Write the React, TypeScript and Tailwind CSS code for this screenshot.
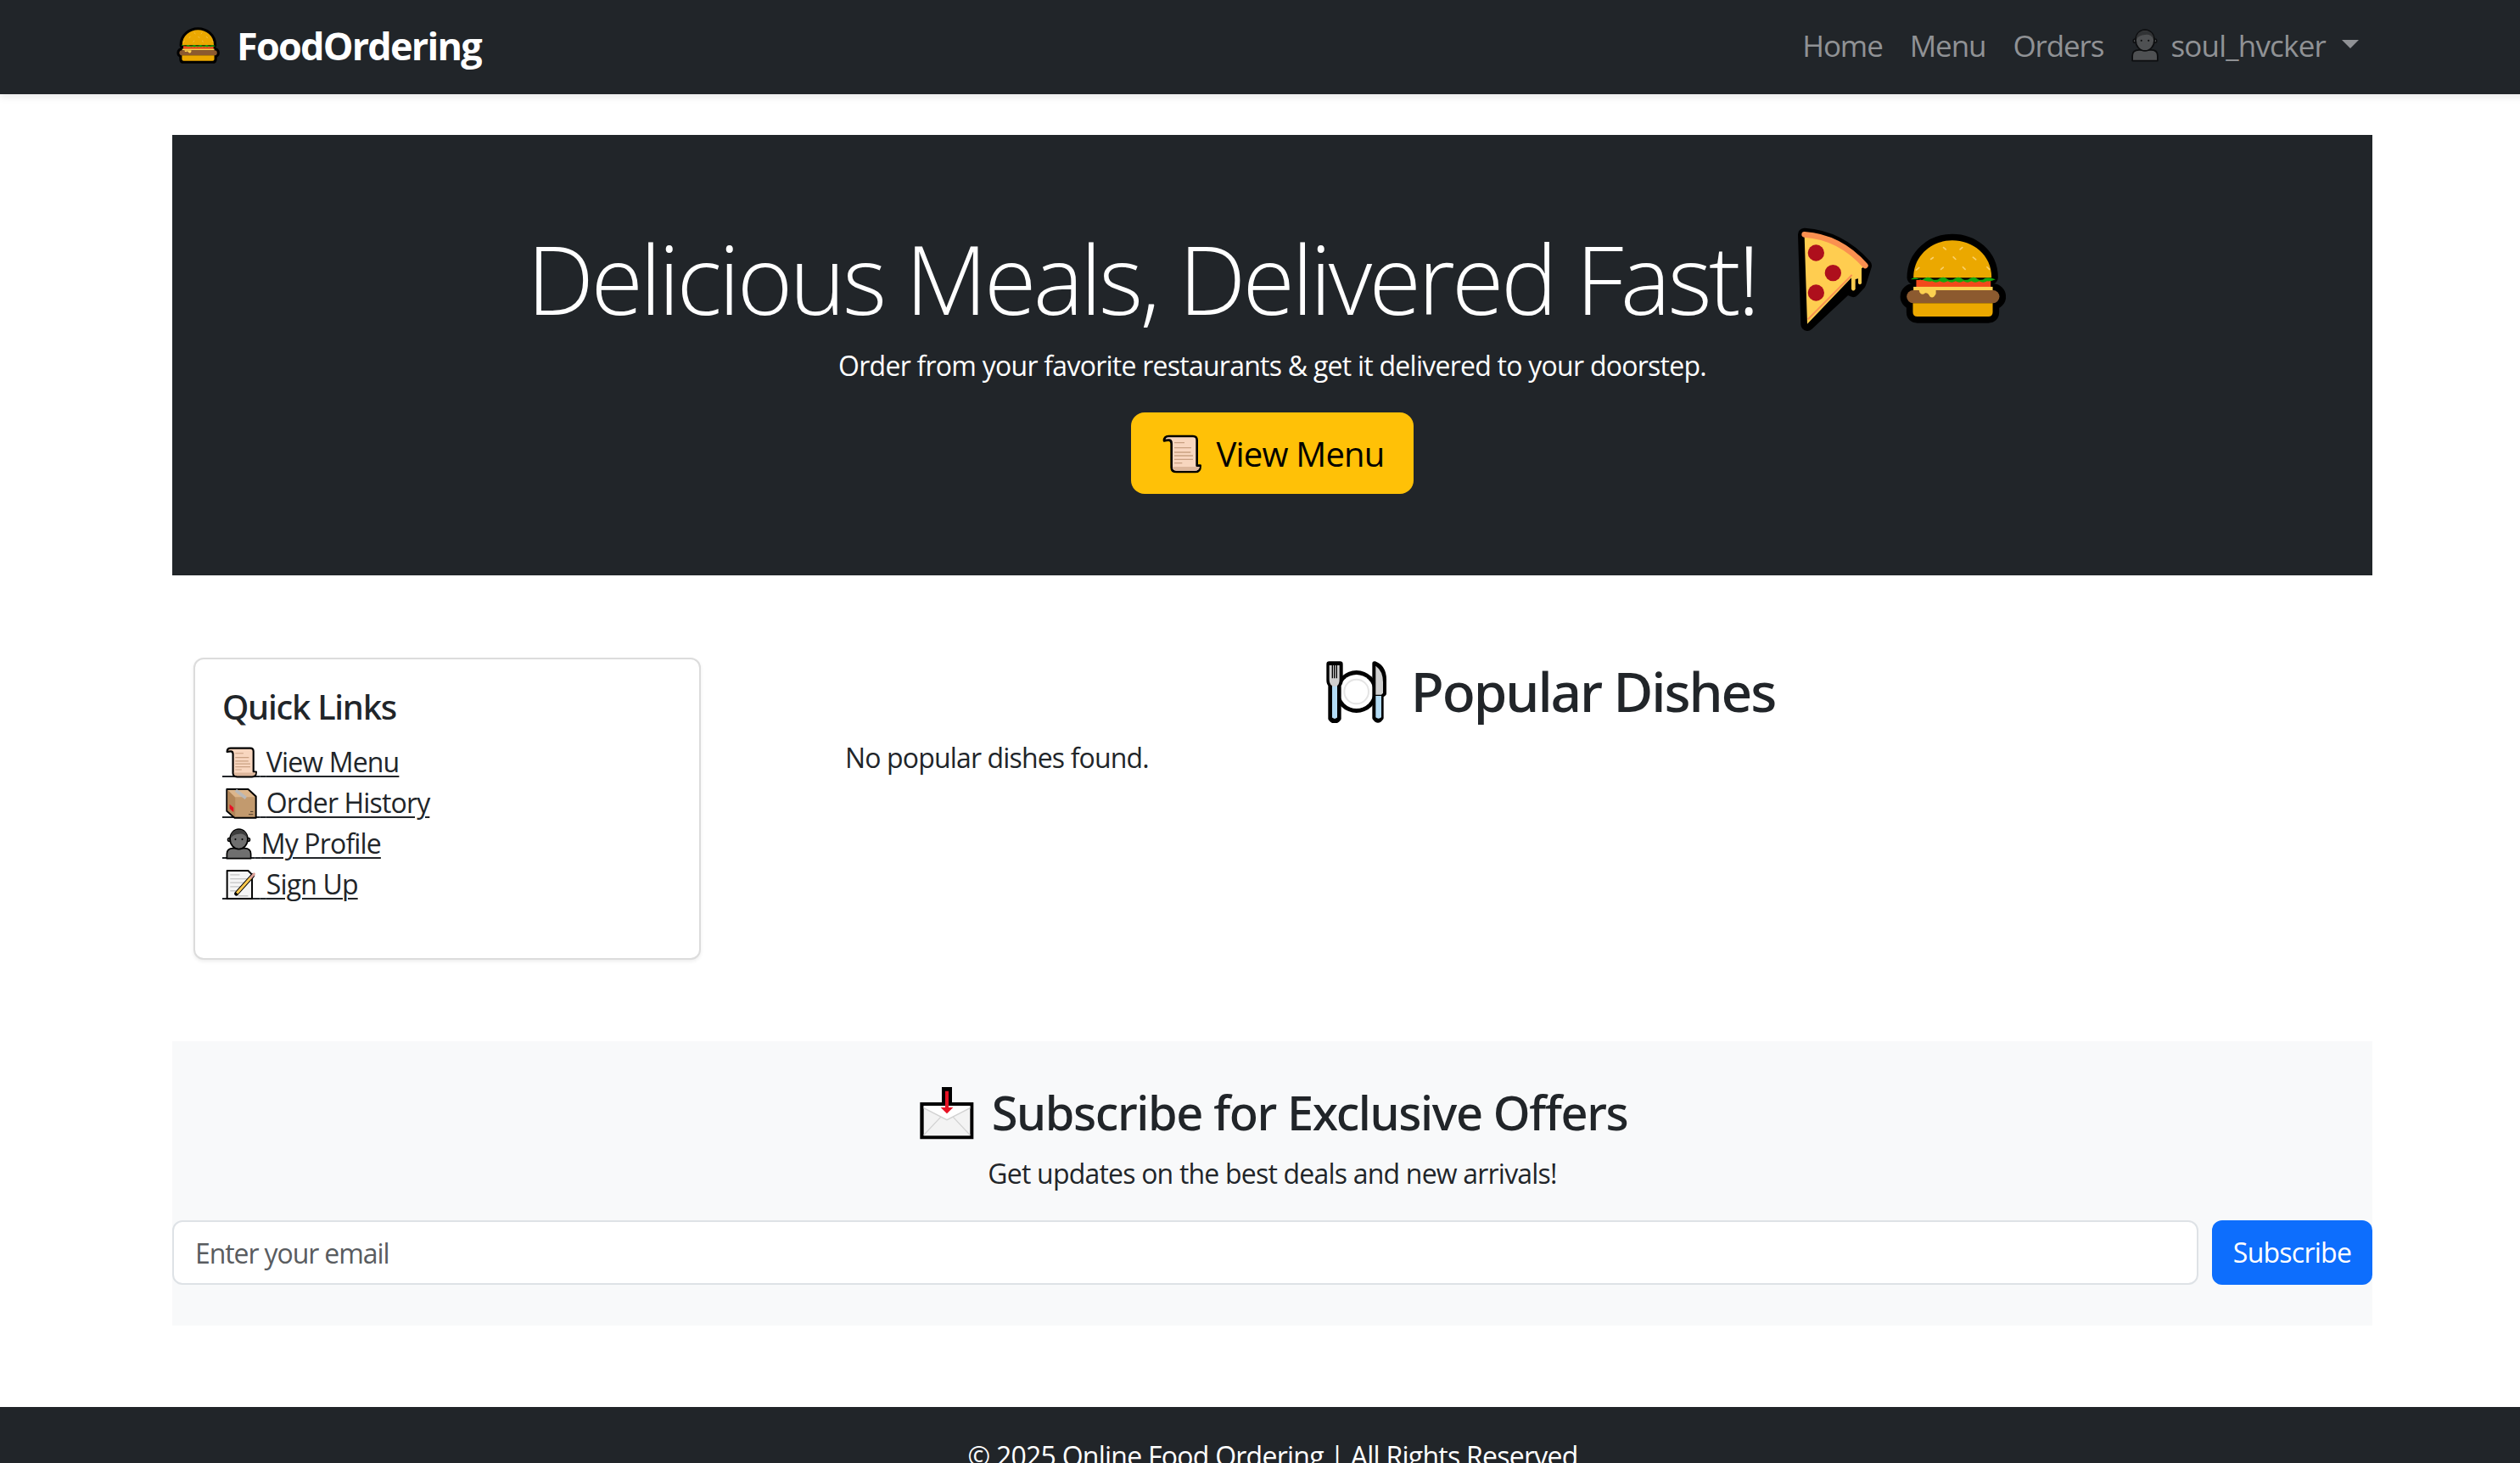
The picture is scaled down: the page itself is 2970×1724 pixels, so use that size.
const font = "font-['Open_Sans',sans-serif]";

type IconProps = { className?: string };

const BurgerIcon = ({ className }: IconProps) => {
  const shapes = (
    <>
      <path d="M530 258C530 175 600 125 668 125C740 125 808 175 808 258Z" />
      <rect x="506" y="302" width="330" height="46" rx="23" />
      <path d="M528 348H812V380Q812 396 796 396H544Q528 396 528 380Z" />
    </>
  );
  return (
    <svg className={className} viewBox="482 100 376 320">
      <g fill="#000" stroke="#000" strokeWidth="46" strokeLinejoin="round">{shapes}</g>
      <path d="M530 258C530 175 600 125 668 125C740 125 808 175 808 258Z" fill="#eba800" />
      <g stroke="#fbd069" strokeWidth="5" strokeLinecap="round">
        <path d="M637 150l8 7M704 150l-8 7M592 192l8-6M672 184l8 8M742 185l10 8M628 228l8-7M706 220l8 8M792 220l8 8M540 230l10-8" />
      </g>
      <rect x="540" y="266" width="265" height="26" fill="#f2491b" />
      <path
        d="M520 264q12-10 24-4q12 10 26 0q14-8 26 2q14 8 28-2q14-8 26 2q14 8 28-2q14-8 26 2q14 8 28-2q14-8 26 2q14 8 26-2q12-6 38 4q-16 8-30 6q-14 8-28 0q-14 8-28 0q-14 8-28 0q-14 8-28 0q-14 8-28 0q-14 8-28 0q-14 8-28 0q-14 4-42-8Z"
        fill="#16a80e"
      />
      <rect x="530" y="290" width="282" height="14" fill="#fcd050" />
      <rect x="506" y="302" width="330" height="46" rx="23" fill="#8c5a2f" />
      <path d="M550 302H610V315Q600 335 588 324Q582 310 572 312Q560 322 552 310Z" fill="#fcd050" />
      <path d="M528 348H812V380Q812 396 796 396H544Q528 396 528 380Z" fill="#eba800" />
    </svg>
  );
};

const PizzaIcon = ({ className }: IconProps) => (
  <svg className={className} viewBox="115 78 285 378">
    <g fill="#000" stroke="#000" strokeWidth="46" strokeLinejoin="round" strokeLinecap="round">
      <path d="M150 112C240 118 310 160 365 222L345 285L322 310L300 300L160 430Z" />
    </g>
    <path d="M150 118C240 125 310 170 362 225L340 240L160 428Z" fill="#ffcd50" />
    <path d="M318 255L162 412" stroke="#fa9050" strokeWidth="6" />
    <path d="M150 112C240 118 310 160 365 222" fill="none" stroke="#fa9050" strokeWidth="20" strokeLinecap="round" />
    <path d="M316 262L352 225V285Q346 292 340 285V268L330 270V305Q322 316 316 305Z" fill="#ffcd50" />
    <circle cx="191" cy="177" r="29" fill="#ae0f1c" />
    <circle cx="251" cy="248" r="29" fill="#ae0f1c" />
    <circle cx="191" cy="318" r="29" fill="#ae0f1c" />
  </svg>
);

const ScrollIcon = ({ className }: IconProps) => (
  <svg className={className} viewBox="154 128 138 138">
    <path
      d="M160 150Q160 134 176 134H262Q276 134 276 148V238H288Q288 260 270 260H204Q186 260 186 244V160Q186 148 176 148Q168 148 160 150Z"
      fill="#f8d6bf"
      stroke="#000"
      strokeWidth="8"
      strokeLinejoin="round"
    />
    <path d="M190 242H286Q284 256 270 256H204Q192 256 190 242Z" fill="#ddb79c" />
    <path d="M196 157H232M196 175H256M196 191H254M196 203H262M196 216H262M196 229H224" stroke="#c9a183" strokeWidth="4" />
  </svg>
);

const BoxIcon = ({ className }: IconProps) => (
  <svg className={className} viewBox="134 474 112 112">
    <path d="M138 480H214L242 506V582H166L138 558Z" fill="#c29a6e" stroke="#000" strokeWidth="6" strokeLinejoin="round" />
    <path d="M141 483H212L238 508H168Z" fill="#dcb68c" />
    <path d="M141 483L168 510V579L141 556Z" fill="#b28659" />
    <path d="M170 484L206 512" stroke="#b9b9b9" strokeWidth="11" />
    <path d="M148 534L162 546V562L148 550Z" fill="#e81224" />
    <path d="M222 560H232M216 570H232" stroke="#4a3a2a" strokeWidth="3" />
  </svg>
);

const PersonIcon = ({ className }: IconProps) => (
  <svg className={className} viewBox="132 618 92 110">
    <path d="M136 724V708Q136 688 158 688H198Q220 688 220 708V724Z" fill="#6f6f6f" stroke="#000" strokeWidth="5" strokeLinejoin="round" />
    <circle cx="145" cy="658" r="6" fill="#6f6f6f" stroke="#000" strokeWidth="4" />
    <circle cx="211" cy="658" r="6" fill="#6f6f6f" stroke="#000" strokeWidth="4" />
    <ellipse cx="178" cy="656" rx="31" ry="35" fill="#6f6f6f" stroke="#000" strokeWidth="5" />
    <path d="M149 652Q150 624 178 624Q206 624 207 652Q196 634 178 638Q158 640 149 652Z" fill="#3d3d3d" />
    <circle cx="166" cy="657" r="3" fill="#000" />
    <circle cx="190" cy="657" r="3" fill="#000" />
  </svg>
);

const MemoIcon = ({ className }: IconProps) => (
  <svg className={className} viewBox="132 762 112 112">
    <path d="M137 768H212L226 782V868H137Z" fill="#f5f5f5" stroke="#000" strokeWidth="6" strokeLinejoin="round" />
    <path d="M148 783H182M148 797H210M148 811H206M148 825H190M148 840H170M176 858H212" stroke="#c4c4c4" strokeWidth="4" />
    <path d="M170 850L228 786" stroke="#000" strokeWidth="15" strokeLinecap="round" />
    <path d="M172 848L222 792" stroke="#fcc94e" strokeWidth="9" />
    <path d="M222 792L233 780" stroke="#e0a39a" strokeWidth="9" strokeLinecap="round" />
  </svg>
);

const PlateIcon = ({ className }: IconProps) => (
  <svg className={className} viewBox="100 54 222 222">
    <circle cx="210" cy="165" r="75" fill="#000" />
    <circle cx="210" cy="165" r="60" fill="#fff" />
    <circle cx="210" cy="165" r="43" fill="none" stroke="#e4e4e4" strokeWidth="6" />
    <path d="M114 68H152V125Q152 135 146 140V260Q133 276 120 260V140Q114 135 114 125Z" fill="#000" stroke="#000" strokeWidth="20" strokeLinejoin="round" />
    <path d="M114 72H150V122Q150 138 142 144V256Q133 264 124 256V144Q114 138 114 122Z" fill="#cfcfcf" />
    <path d="M124 146H142V256Q133 264 124 256Z" fill="#b3dcf5" />
    <path d="M125 72V118M132 72V118M140 72V118" stroke="#000" strokeWidth="4" />
    <path d="M275 66Q308 80 308 122V172L298 180V258Q286 276 274 258V66Z" fill="#000" stroke="#000" strokeWidth="16" strokeLinejoin="round" />
    <path d="M278 74Q304 92 304 132V170L298 176H278Z" fill="#cfcfcf" />
    <path d="M278 180H298V256Q288 264 278 256Z" fill="#b3dcf5" />
  </svg>
);

const EnvelopeIcon = ({ className }: IconProps) => (
  <svg className={className} viewBox="76 64 192 186">
    <path d="M77 118H154V64H190V118H266V248H77Z" fill="#000" />
    <rect x="90" y="130" width="164" height="106" fill="#f3f3f3" />
    <path d="M90 130H254V138L172 180L90 138Z" fill="#fff" />
    <path d="M90 138L172 180L254 138M90 234L152 168M254 234L192 168" fill="none" stroke="#d2d2d2" strokeWidth="4" />
    <path d="M166 78H178V136H194L172 158L150 136H166Z" fill="#e81224" />
  </svg>
);

const quickLinks = [
  { label: "View Menu", Icon: ScrollIcon, size: "w-[37px] h-[37px]", gap: "tracking-[36px]" },
  { label: "Order History", Icon: BoxIcon, size: "w-[37px] h-[37px]", gap: "tracking-[36px]" },
  { label: "My Profile", Icon: PersonIcon, size: "w-[31px] h-[37px]", gap: "tracking-[30px]" },
  { label: "Sign Up", Icon: MemoIcon, size: "w-[37px] h-[37px]", gap: "tracking-[36px]" },
];

const Navbar = () => (
  <nav className="h-[111px] bg-[#212529] shadow-[0_4px_8px_rgba(0,0,0,0.08)]">
    <div className="mx-auto flex h-full w-[2640px] items-center justify-between px-6 pb-[4px]">
      <a className="flex items-center gap-[20px] pl-[4px] text-[45px] leading-[60px] font-bold tracking-[-1.8px] text-white">
        <BurgerIcon className="h-[43px] w-[51px]" />
        FoodOrdering
      </a>
      <div className="flex items-center text-[35px] leading-[48px] tracking-[-1.1px] text-[#909295]">
        <a className="px-4">Home</a>
        <a className="px-4">Menu</a>
        <a className="px-4">Orders</a>
        <a className="flex items-center px-4">
          <PersonIcon className="mr-[13px] h-[39px] w-[34px] opacity-60" />
          <span className="tracking-[-0.8px]">soul_hvcker</span>
          <span className="mb-[4px] ml-[19px] h-0 w-0 border-x-[10px] border-t-[10px] border-x-transparent border-t-[#909295]" />
        </a>
      </div>
    </div>
  </nav>
);

const Hero = () => (
  <section className="mt-12 bg-[#212529] py-24 text-center text-white">
    <h1 className="flex h-[135px] items-center justify-center pt-[10px] pr-[14px] text-[112px] leading-[134px] font-light tracking-[-3.7px]">
      Delicious Meals, Delivered Fast!
      <PizzaIcon className="ml-[44px] h-[126px] w-[95px]" />
      <BurgerIcon className="ml-[29px] h-[106px] w-[125px]" />
    </h1>
    <p className="mt-4 pt-[2px] text-[32px] leading-[46px] tracking-[-0.75px]">
      Order from your favorite restaurants &amp; get it delivered to your doorstep.
    </p>
    <a className="mt-8 inline-flex h-[96px] w-[333px] items-center justify-center gap-[17px] rounded-2xl bg-[#ffc107] pt-[2px] pl-[3px] text-[40px] tracking-[-0.8px] text-black">
      <ScrollIcon className="h-[46px] w-[46px]" />
      View Menu
    </a>
  </section>
);

const QuickLinks = () => (
  <aside className="ml-[25px] h-[356px] w-[598px] rounded-xl border-2 border-[#dcdcdc] bg-white px-8 pt-8 shadow-[0_2px_4px_rgba(0,0,0,0.075)]">
    <h5 className="mb-[17px] font-['Noto_Sans',sans-serif] text-[40px] leading-[48px] font-medium tracking-[-1.25px] text-[#212529]">Quick Links</h5>
    <ul>
      {quickLinks.map(({ label, Icon, size, gap }) => (
        <li key={label} className="text-[32px] leading-[48px]">
          <a className="relative inline-block tracking-[-0.85px] text-[#212529] underline decoration-2 underline-offset-[4px]">
            <Icon className={`absolute top-[6px] left-[4px] ${size}`} />
            <span className={gap}>&nbsp;</span>
            {" "}{label}
          </a>
        </li>
      ))}
    </ul>
  </aside>
);

const PopularDishes = () => (
  <section className="ml-[146px] w-[1710px] px-6">
    <h2 className="mb-4 flex h-[77px] items-center justify-center gap-[27px] pt-[2px] font-['Noto_Sans',sans-serif] text-[64px] leading-[77px] font-medium tracking-[-2.1px] text-[#212529]">
      <PlateIcon className="h-[74px] w-[74px]" />
      Popular Dishes
    </h2>
    <p className="pt-[2px] text-[32px] leading-[46px] tracking-[-0.85px] text-[#212529]">No popular dishes found.</p>
  </section>
);

const Subscribe = () => (
  <section className="mt-24 bg-[#f8f9fa] py-12 text-center">
    <h3 className="flex h-[67px] items-center justify-center gap-[21px] pt-[3px] pl-[3px] font-['Noto_Sans',sans-serif] text-[56px] leading-[67px] font-medium tracking-[-1.4px] text-[#212529]">
      <EnvelopeIcon className="mt-[3px] h-[62px] w-[64px]" />
      Subscribe for Exclusive Offers
    </h3>
    <p className="mt-4 pt-[2px] text-[32px] leading-[46px] tracking-[-0.8px] text-[#212529]">
      Get updates on the best deals and new arrivals!
    </p>
    <form className="mt-8 flex gap-4">
      <input
        className="h-[76px] flex-1 rounded-xl border-2 border-[#dee2e6] bg-white px-[25px] text-[32px] tracking-[-1.1px] text-[#212529] placeholder:text-[#595c5f]"
        placeholder="Enter your email"
      />
      <button className="h-[76px] w-[189px] rounded-xl bg-[#0d6efd] text-[32px] tracking-[-0.75px] text-white">Subscribe</button>
    </form>
  </section>
);

export default function App() {
  return (
    <div className={`h-[1724px] w-full overflow-hidden bg-white ${font}`}>
      <div className="w-[3000px]">
        <Navbar />
        <main className="mx-auto w-[2640px] pr-6 pl-[23px]">
          <Hero />
          <div className="mt-[97px] flex items-start">
            <QuickLinks />
            <PopularDishes />
          </div>
          <Subscribe />
        </main>
        <footer className="mt-24 bg-[#212529] pt-[34px] pb-8 text-center text-[32px] leading-[48px] tracking-[-0.75px] text-white">
          © 2025 Online Food Ordering | All Rights Reserved
        </footer>
      </div>
    </div>
  );
}
